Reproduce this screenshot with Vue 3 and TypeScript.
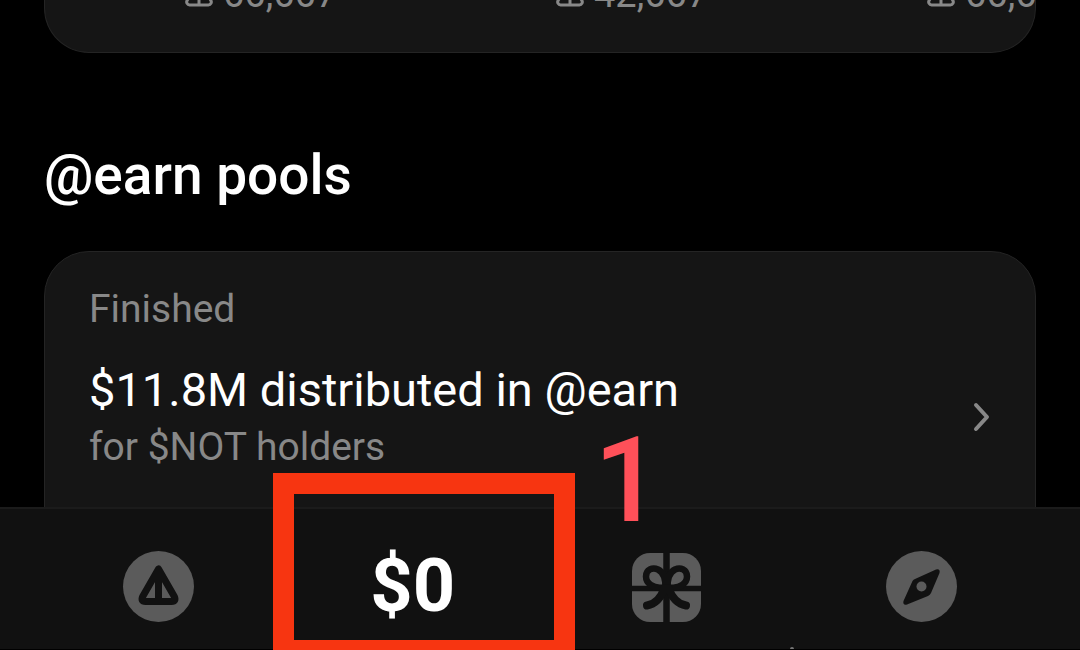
<script setup lang="ts">
interface Stat {
  id: number
  value: string
}

const stats: Stat[] = [
  { id: 1, value: '66,667' },
  { id: 2, value: '42,667' },
  { id: 3, value: '66,667' },
]
</script>

<template>
  <div class="screen">
    <main class="content">
      <section class="card stats" aria-label="Statistics">
        <div v-for="stat in stats" :key="stat.id" class="stat">
          <svg class="stat-icon" viewBox="0 0 28 30" aria-hidden="true">
            <path d="M12 3.5 2.5 23a3 3 0 0 0 2.500 5h18a3 3 0 0 0 2.500-5L16 3.5a2.200 2.200 0 0 0-4 0ZM14 4v24" />
          </svg>
          <span>{{ stat.value }}</span>
        </div>
      </section>

      <h2 class="heading">@earn pools</h2>

      <a class="card pool" href="#pool">
        <span class="muted">Finished</span>
        <span class="pool-row">
          <span class="pool-text">
            <span class="title">$11.8M distributed in @earn</span>
            <span class="muted">for $NOT holders</span>
          </span>
          <svg class="chevron" viewBox="0 0 18 30" aria-hidden="true">
            <path d="M3 3 14 15 3 27" />
          </svg>
        </span>
      </a>
    </main>

    <nav class="tabs">
      <button class="tab" type="button" aria-label="Home">
        <svg class="tab-icon" viewBox="0 0 72 72" aria-hidden="true">
          <circle class="fill" cx="36.500" cy="35.500" r="35.500" />
          <path class="cut line" d="M36.500 18 20.700 45.500Q18.500 50.500 23.500 50.500H49.500Q54.500 50.500 52.300 45.500ZM36.500 20V50" />
        </svg>
      </button>
      <button class="tab balance" type="button">$0</button>
      <button class="tab" type="button" aria-label="Gifts">
        <svg class="tab-icon" viewBox="0 0 72 72" aria-hidden="true">
          <rect class="fill" x="1" y="2" width="69" height="69" rx="18" />
          <path class="cut" d="M35.500 0V72" stroke-width="6.500" />
          <path class="cut" d="M0 37.500H72" stroke-width="5.500" />
          <path
            class="cut"
            stroke-width="6.500"
            d="M34.500 36C21 39 15 31 15 25.500C15 18.500 21.500 16 27 18.500C32 21 34.500 28 34.500 36M36.500 36C50 39 56 31 56 25.500C56 18.500 49.500 16 44 18.500C39 21 36.500 28 36.500 36"
          />
          <path class="cut" stroke-width="8" d="M33.500 37C30 47 25 53 16 54.500M37.500 37C41 47 46 53 55 54.500" />
        </svg>
      </button>
      <button class="tab" type="button" aria-label="Explore">
        <svg class="tab-icon" viewBox="0 0 72 72" aria-hidden="true">
          <circle class="fill" cx="35.500" cy="35.500" r="35.500" />
          <path
            class="needle"
            d="M29 28 50 18.500Q54.500 17.500 53.500 22L45 42Q44 44 42 45L21 53.500Q16.500 54.500 17.500 50L26.500 30Q27.500 28.500 29 28Z"
          />
          <circle class="fill" cx="35.500" cy="35.500" r="5" />
        </svg>
      </button>
      <i class="dot"></i>
    </nav>

    <div class="frame"></div>
    <span class="step">1</span>
  </div>
</template>

<style>
body {
  margin: 0;
  background: #000;
}
</style>

<style scoped>
.screen {
  position: relative;
  display: flex;
  flex-direction: column;
  height: 100vh;
  overflow: hidden;
  background: #000;
  color: #fff;
  font-family: Roboto, "Liberation Sans", sans-serif;
}

.content {
  flex: 1;
  min-height: 0;
  padding: 0 44px;
  overflow: hidden;
}

.card {
  box-sizing: border-box;
  border: 1px solid #242424;
  background: #151515;
}

.stats {
  display: flex;
  align-items: flex-end;
  height: 53px;
  padding: 0 0 35px 140px;
  overflow: hidden;
  border-top: 0;
  border-radius: 0 0 45px 45px;
}

.stat {
  display: flex;
  flex: 0 0 371px;
  align-items: flex-end;
  gap: 10px;
  color: #888;
  font-size: 38px;
  line-height: 46px;
}

.stat-icon {
  width: 28px;
  height: 30px;
  margin-bottom: 10px;
  fill: none;
  stroke: #888;
  stroke-width: 3;
}

.heading {
  margin: 90px 0 44px;
  font-size: 55px;
  font-weight: 500;
  line-height: 64px;
}

.pool {
  display: flex;
  flex-direction: column;
  gap: 24px;
  height: 400px;
  padding: 32px 44px;
  border-radius: 45px;
  color: #fff;
  text-decoration: none;
}

.muted {
  color: #888;
  font-size: 39px;
  line-height: 50px;
}

.pool-row {
  display: flex;
  align-items: center;
  justify-content: space-between;
}

.pool-text {
  display: flex;
  flex-direction: column;
}

.title {
  font-size: 47px;
  line-height: 64px;
}

.chevron {
  width: 18px;
  height: 30px;
  margin-top: 4px;
  fill: none;
  stroke: #888;
  stroke-linecap: round;
  stroke-linejoin: round;
  stroke-width: 4;
}

.tabs {
  position: relative;
  display: flex;
  box-sizing: border-box;
  height: 143px;
  padding: 0 31px;
  border-top: 2px solid #1b1b1b;
  border-bottom: 1px solid #000;
  background: #111;
}

.tab {
  display: flex;
  flex: 1;
  align-items: center;
  justify-content: center;
  min-width: 0;
  padding: 16px 0 0;
  border: 0;
  background: none;
  color: #fff;
  font-family: inherit;
  cursor: pointer;
}

.balance {
  padding-top: 12px;
  font-size: 74px;
  font-weight: 700;
}

.tab-icon {
  width: 72px;
  height: 72px;
}

.fill {
  fill: #5b5b5b;
}

.cut {
  fill: none;
  stroke: #111;
  stroke-linecap: round;
  stroke-linejoin: round;
}

.line {
  stroke-width: 7;
}

.needle {
  fill: #111;
}

.dot {
  position: absolute;
  bottom: 0;
  left: 790px;
  width: 4px;
  height: 2px;
  border-radius: 2px 2px 0 0;
  background: #777;
}

.frame {
  position: absolute;
  top: 473px;
  left: 273px;
  box-sizing: border-box;
  width: 302px;
  height: 188px;
  border: 21px solid #f73511;
}

.step {
  position: absolute;
  top: 412px;
  left: 594px;
  color: #ff5059;
  font-size: 118px;
  font-weight: 500;
  line-height: 138px;
}
</style>
